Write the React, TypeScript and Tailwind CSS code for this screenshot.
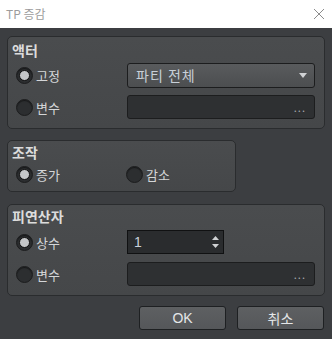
import { ReactNode } from 'react';

const FONT = { fontFamily: '"Noto Sans CJK KR", "Noto Sans", "Liberation Sans", sans-serif' };

function Radio({ checked, label }: { checked?: boolean; label: string }) {
  return (
    <div className="flex items-center">
      <span className="w-[17px] h-[17px] rounded-full border border-[#1c1d1e] bg-[#2c2e30] flex items-center justify-center shadow-[inset_0_1px_1px_rgba(0,0,0,0.5)]">
        {checked && <span className="w-[11px] h-[11px] rounded-full bg-[#c4c6c8] border border-[#0f0f0f]" />}
      </span>
      <span className="ml-[3px] text-[13px] leading-none text-[#d4d6d8]">{label}</span>
    </div>
  );
}

function Group({ title, className, children }: { title: string; className?: string; children: ReactNode }) {
  return (
    <div className={`rounded-[5px] border border-[#2a2c2e] bg-gradient-to-b from-[#4a4c4e] to-[#454749] ${className ?? ''}`}>
      <div className="pl-[4px] text-[14px] font-bold leading-[16px] text-[#dcdcdc]">{title}</div>
      {children}
    </div>
  );
}

function RefField() {
  return (
    <div className="w-[188px] h-[24px] rounded-[3px] border border-[#1c1d1e] bg-[#2e3032] flex items-center justify-end pr-[8px] text-[11px] leading-none text-[#a8aaac] tracking-[1px]">
      ...
    </div>
  );
}

export default function App() {
  return (
    <div className="w-[332px] h-[339px] flex flex-col overflow-hidden" style={FONT}>
      <div className="h-[28px] bg-white flex items-center justify-between pl-[6px] pr-[7px] shrink-0">
        <span className="text-[12px] text-[#9c9c9c]">TP 증감</span>
        <svg width="12" height="12" viewBox="0 0 12 12" stroke="#8c8c8c" strokeWidth="1">
          <path d="M1 1L11 11M11 1L1 11" />
        </svg>
      </div>

      <div className="flex-1 bg-[#3c3e41] px-[7px] pt-[8px]">
        <Group title="액터" className="pt-[5px] pb-[9px]">
          <div className="mt-[5px] flex items-center h-[25px] pl-[8px]">
            <div className="w-[111px]"><Radio checked label="고정" /></div>
            <div className="w-[188px] h-[25px] rounded-[3px] border border-[#1c1d1e] bg-gradient-to-b from-[#595b5d] to-[#4c4e50] flex items-center justify-between pl-[8px] pr-[7px]">
              <span className="text-[14px] text-[#c8d0d8] tracking-[1px]">파티 전체</span>
              <svg width="8" height="5" viewBox="0 0 8 5"><path d="M0 0H8L4 5Z" fill="#d0d2d4" /></svg>
            </div>
          </div>
          <div className="mt-[7px] flex items-center h-[24px] pl-[8px]">
            <div className="w-[111px]"><Radio label="변수" /></div>
            <RefField />
          </div>
        </Group>

        <Group title="조작" className="mt-[11px] w-[229px] pt-[3px] pb-[8px]">
          <div className="mt-[6px] flex items-center h-[17px] pl-[8px]">
            <div className="w-[110px]"><Radio checked label="증가" /></div>
            <Radio label="감소" />
          </div>
        </Group>

        <Group title="피연산자" className="mt-[12px] pt-[3px] pb-[9px]">
          <div className="mt-[6px] flex items-center h-[24px] pl-[8px]">
            <div className="w-[111px]"><Radio checked label="상수" /></div>
            <div className="w-[97px] h-[24px] border border-[#101112] bg-[#2a2c2e] flex items-center justify-between pl-[6px] pr-[4px]">
              <span className="text-[14px] text-[#c8d0d8]" style={{ fontFamily: '"Liberation Sans", sans-serif' }}>1</span>
              <div className="flex flex-col gap-[4px]">
                <svg width="7" height="4" viewBox="0 0 7 4"><path d="M0 4H7L3.5 0Z" fill="#d0d2d4" /></svg>
                <svg width="7" height="4" viewBox="0 0 7 4"><path d="M0 0H7L3.5 4Z" fill="#d0d2d4" /></svg>
              </div>
            </div>
          </div>
          <div className="mt-[8px] flex items-center h-[24px] pl-[8px]">
            <div className="w-[111px]"><Radio label="변수" /></div>
            <RefField />
          </div>
        </Group>

        <div className="mt-[10px] flex justify-end gap-[11px] pr-[1px]">
          <button className="w-[87px] h-[24px] rounded-[3px] border border-[#1e2022] bg-gradient-to-b from-[#5e6062] to-[#55575a] text-[14px] text-[#e4e6e8]" style={{ fontFamily: '"Liberation Sans", sans-serif' }}>
            OK
          </button>
          <button className="w-[87px] h-[24px] rounded-[3px] border border-[#1e2022] bg-gradient-to-b from-[#5e6062] to-[#55575a] text-[14px] text-[#e4e6e8]">
            취소
          </button>
        </div>
      </div>
    </div>
  );
}
